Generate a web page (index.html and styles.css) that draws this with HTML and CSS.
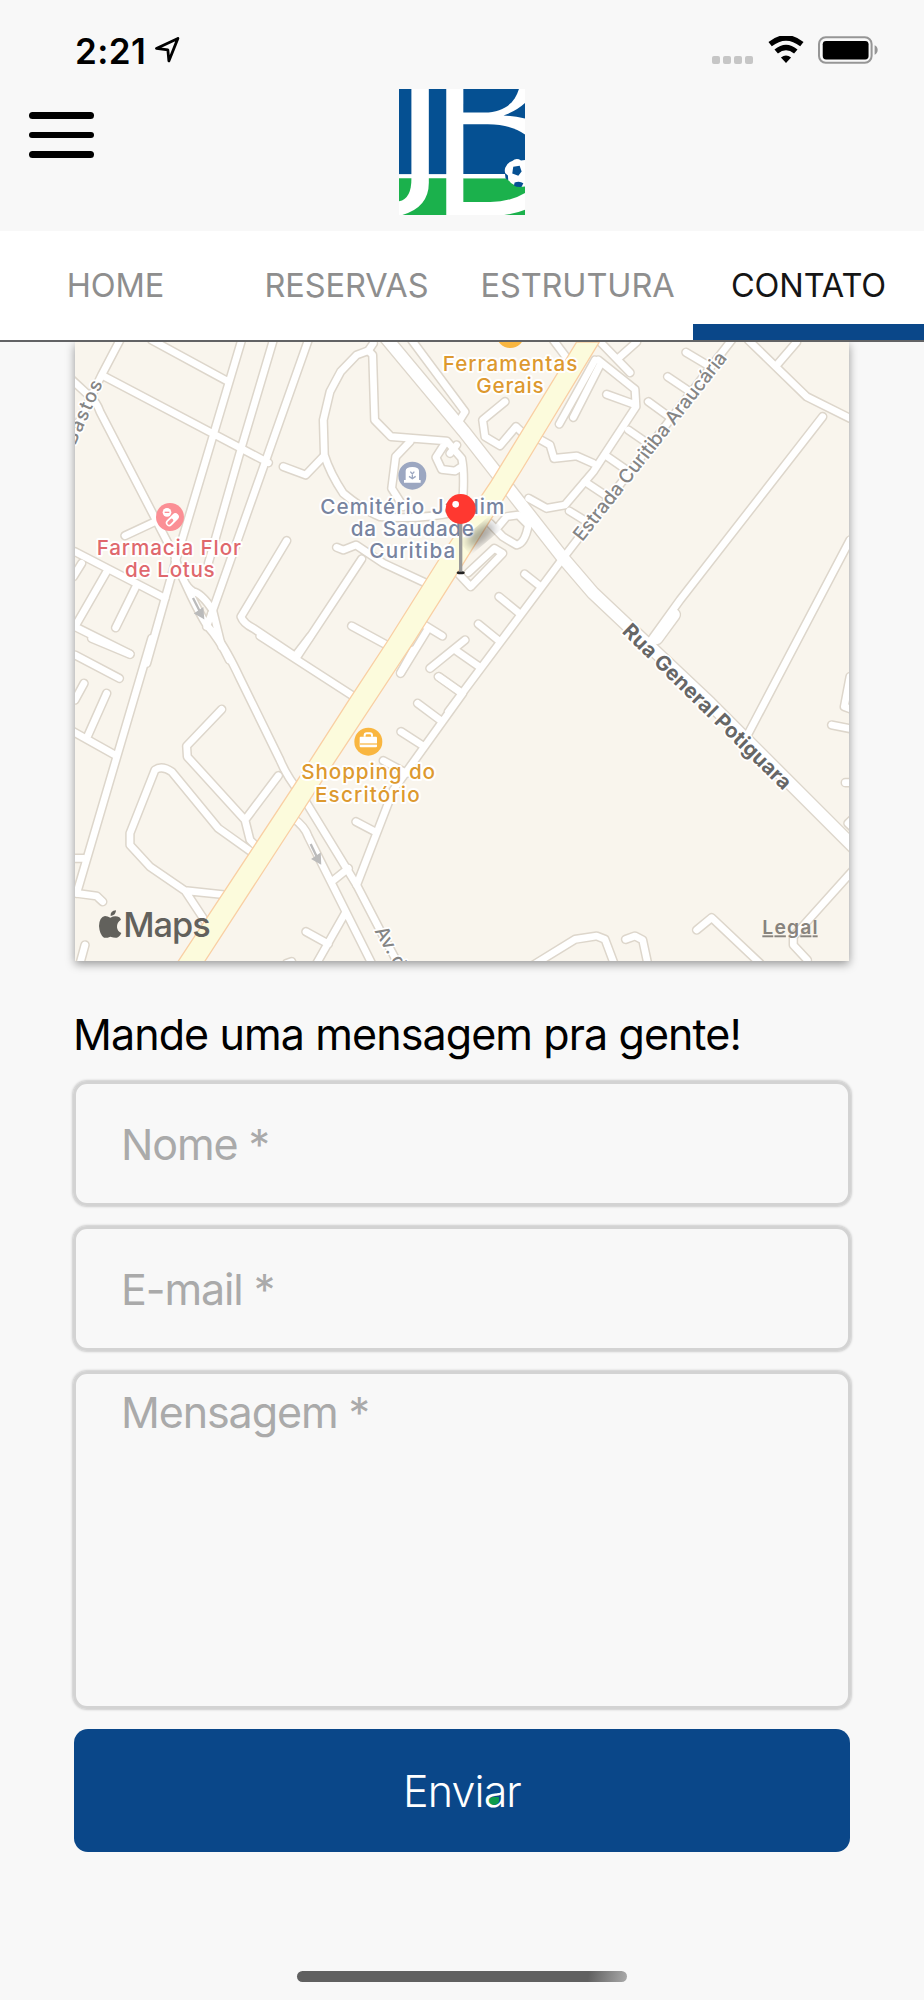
FILE: index.html
```html
<!DOCTYPE html>
<html lang="pt-BR">
  <head>
    <meta charset="UTF-8" />
    <meta name="viewport" content="width=device-width, initial-scale=1.0" />
    <title>JB | Contato</title>

    <link rel="stylesheet" href="styles.css">
  </head>
  <body>
    <div class="status-bar">
      <div class="status-left">
        <span class="time">2:21</span>
        <svg class="location" viewBox="0 0 72 75">
          <path d="M4 33 L66 4 L40 69 L37 37 Z" />
        </svg>
      </div>
      <div class="status-right">
        <div class="signal"><i></i><i></i><i></i><i></i></div>
        <svg class="wifi" viewBox="0 0 106 80">
          <path d="M6 24 Q53 -13 100 24" />
          <path d="M24 46 Q53 22 82 46" />
          <path class="wifi-dot" d="M53 80 L38 64 Q53 51 68 64 Z" />
        </svg>
        <svg class="battery" viewBox="0 0 178 82">
          <rect class="battery-shell" x="3" y="3" width="156" height="76" rx="20" />
          <rect x="14" y="14" width="136" height="55" rx="10" />
          <path class="battery-tip" d="M168 27 Q177 31 177 41 Q177 51 168 55 Z" />
        </svg>
      </div>
    </div>

    <header class="header">
      <button class="menu" aria-label="Menu"><span></span><span></span><span></span></button>
      <svg class="logo" viewBox="0 0 376 376">
        <rect width="376" height="376" fill="#fff" />
        <g fill="#055092">
          <rect width="37" height="254" />
          <rect x="89" width="52" height="254" />
          <path d="M192 0H358C346 42 312 70 255 70H192Z" />
          <path d="M376 42V88Q344 80 312 79Q350 66 376 42Z" />
          <path d="M192 105H265Q335 106 376 136V254H192Z" />
        </g>
        <g fill="#1bb14c">
          <path d="M0 266H37Q38 327 0 335Z" />
          <path d="M89 266H141V376H10Q89 353 89 280Z" />
          <path d="M192 266H376V310Q330 338 268 337H192Z" />
          <path d="M376 360V376H314Q350 371 376 360Z" />
        </g>
        <path fill="#fff" d="M192 254H320V266H192Z" />
        <path fill="#fff" d="M338 215Q350 204 364 213L376 212V291Q340 294 325 270Q312 252 317 235Q322 220 338 215Z" />
        <g fill="#055092">
          <path d="M341 232L360 229L366 246L356 259L338 252Z" />
          <path d="M345 279Q360 273 371 281L366 292Q352 294 343 288Z" />
          <path d="M316 251L325 258L326 272L318 266Z" />
        </g>
      </svg>
    </header>

    <nav class="tabs">
      <a class="tab">HOME</a>
      <a class="tab">RESERVAS</a>
      <a class="tab">ESTRUTURA</a>
      <a class="tab active">CONTATO</a>
    </nav>

    <main>
      <svg class="map" viewBox="45 36 2322 1857">
        <defs>
          <filter id="blur"><feGaussianBlur stdDeviation="14" /></filter>
          <g id="streets">
            <!-- north west -->
            <path d="M180 30L125 135L45 300M125 135L625 398M275 30L505 155M545 30L345 700L260 1000M640 30L545 350L445 700M745 30L455 850" />
            <path d="M20 135L85 195Q110 215 120 245L345 680Q370 770 400 785Q425 790 458 840L485 950M345 690Q400 820 440 885Q480 930 508 990M455 850L440 890" />
            <path d="M195 617L285 575M45 665L315 805M140 725L45 890L210 972M230 765L167 893M65 700L40 740M670 410L737 435L790 380" />
            <path d="M940 40L925 62L890 75L842 125L810 185L790 270L793 375Q810 430 850 490Q910 540 960 560Q1080 570 1190 545" />
            <path d="M925 62L938 75L944 270L993 320L1160 333L1205 385Q1215 430 1207 530M1050 335L1007 380L995 475L1030 530M1155 340L1128 382L1145 418L1185 423L1205 410" />
            <path d="M680 632L543 860Q550 880 580 895L700 975M905 687L708 985M830 652L850 660L888 645L970 700L1110 765M875 888L980 945M1085 880L1147 918M1105 895L1022 1030" />
            <path d="M1055 30L1215 245L1190 285M1190 345L1170 370" />
            <!-- north east -->
            <g transform="translate(1170 0)">
              <path d="M310 30L370 110M445 30L540 128M560 36L505 85M435 90L328 282M450 105L370 262M445 90L555 178L558 230L430 425L345 525L290 535L236 505M470 193L550 222" />
              <path d="M165 215L98 270L105 320L150 347L198 290L240 330M255 320L300 345L312 385L380 378L430 400" />
              <path d="M708 67L780 110M653 140L720 185M595 215L660 262M535 300L600 345M465 375L530 420M405 455L465 495M358 543L410 575" />
              <path d="M845 30L335 690L-5 1145M224 732L272 770M147 800L208 850M85 882L150 935M20 963L90 1012" />
              <path d="M895 30L1070 200L1200 265M1040 36L978 108M1118 260L690 810L600 935M1200 630L890 1220" />
              <path d="M120 580L158 620L200 645Q225 640 235 585L205 555L170 560L145 590M15 720L62 770L158 670L133 655L55 728" />
            </g>
            <!-- south west -->
            <g transform="translate(0 930)">
              <path d="M45 45L178 115M95 -5L210 43M275 -5L50 760M72 130L45 180M140 160L80 295M40 275L165 345M470 -10Q500 30 540 115L660 360Q680 410 725 465L890 735L960 870L1010 963" />
              <path d="M600 -12L890 175M750 -10L708 45M485 208L380 318L382 350L555 540L570 600L590 620M655 407L555 540M580 640L475 565L335 395Q305 375 285 390L210 580L210 615L270 680L375 752L500 765M375 752L440 850" />
              <path d="M40 655L70 655M50 760L110 768L128 785M75 915L60 970M700 535Q735 560 745 590L935 970M815 725L865 685M738 875L805 912M855 820L770 970M680 970L695 965" />
              <path d="M1208 160L1000 450L890 735M888 545L945 575M970 362L1040 400M1023 275L1090 318M1073 190L1140 240M1137 110L1205 158M1022 98L1060 30" />
            </g>
            <!-- south east -->
            <g transform="translate(1170 930)">
              <path d="M-60 85L45 0M-35 110L35 160M250 975L375 898L440 888L465 898L492 970M527 898L555 888L578 900L593 970M740 870L785 833L930 970" />
              <path d="M1210 690L1030 890L1030 915L1072 960M1145 255L1210 268M1200 110L1183 200L1210 210M1186 428H1210M1210 535L1194 550L1210 565" />
            </g>
          </g>
          <g id="avenues">
            <path d="M975 20L1210 302L1510 685L1600 790L1950 1120L2400 1570" />
            <path d="M1842 854L1790 925" />
          </g>
        </defs>

        <rect class="land" x="45" y="36" width="2322" height="1857" />
        <use href="#streets" class="street-case" />
        <use href="#avenues" class="avenue-case" />
        <use href="#streets" class="street" />
        <use href="#avenues" class="avenue" />
        <path class="highway" d="M1550 36L1293 455L1155 660L985 930L870 1105L700 1370L355 1893L340 1930H410L435 1893L710 1470L765 1385L1065 930L1182 745L1385 420L1618 36Z" />
        <g class="arrow">
          <path d="M399 804L420 845" /><path d="M429 862L408 850L427 837Z" />
          <path d="M752 1542L771 1582" /><path d="M780 1598L760 1587L779 1574Z" />
        </g>

        <g class="street-name">
          <text x="129" y="160" text-anchor="end" transform="rotate(-66 129 160)" textLength="206">Bastos</text>
          <text x="1567" y="637" transform="rotate(-51.7 1567 637)" textLength="704">Estrada Curitiba Araucária</text>
          <text x="943" y="1802" transform="rotate(61 943 1802)">Av. do</text>
          <text class="strong" x="1684" y="907" transform="rotate(44.4 1684 907)" textLength="680">Rua General Potiguara</text>
        </g>

        <g class="place orange">
          <circle cx="1351" cy="12" r="42" />
          <text x="1148" y="122" textLength="404">Ferramentas</text>
          <text x="1249" y="188" textLength="202">Gerais</text>
          <circle cx="925" cy="1235" r="42" />
          <rect class="glyph" x="899" y="1220" width="52" height="32" rx="3" />
          <path class="glyph-line" d="M914 1220V1216Q914 1210 920 1210H930Q936 1210 936 1216V1220" />
          <path d="M899 1242H951" stroke="#fbd28a" stroke-width="6" />
          <text x="724" y="1348" textLength="401">Shopping do</text>
          <text x="765" y="1415" textLength="314">Escritório</text>
        </g>

        <g class="place red">
          <circle cx="330" cy="561" r="42" />
          <circle class="glyph" cx="321" cy="547" r="13" />
          <path d="M314 547H328" stroke="#fb8f95" stroke-width="4" />
          <path d="M328 578L346 560" stroke="#fff" stroke-width="21" stroke-linecap="round" />
          <path d="M327 579L335 571" stroke="#fb8f95" stroke-width="10" stroke-linecap="round" />
          <text x="110" y="675" textLength="433">Farmacia Flor</text>
          <text x="195" y="741" textLength="269">de Lotus</text>
        </g>

        <g class="place slate">
          <circle cx="1057" cy="437" r="42" />
          <path class="glyph" d="M1037 450V422Q1038 411 1057 411Q1076 411 1077 422V450H1082V458H1032V450Z" />
          <path d="M1057 430V448M1047 439L1057 446L1067 439M1051 425L1057 432L1063 425" fill="none" stroke="#9ca7c1" stroke-width="4" />
          <text x="781" y="552" textLength="552">Cemitério Jardim</text>
          <text x="872" y="619" textLength="370">da Saudade</text>
          <text x="928" y="685" textLength="258">Curitiba</text>
        </g>

        <ellipse class="pin-shadow" cx="1262" cy="615" rx="50" ry="21" transform="rotate(-40 1262 615)" />
        <ellipse cx="1202" cy="728" rx="12" ry="5" fill="#222" />
        <path d="M1202 570V725" stroke="#999" stroke-width="10" />
        <circle cx="1202" cy="537" r="45" fill="#ff3830" />
        <circle cx="1187" cy="523" r="10" fill="#fff" />

        <g class="brand">
          <path d="M151 1763Q166 1755 178 1762Q181 1764 183 1769Q170 1777 171 1792Q172 1804 184 1809Q178 1822 170 1823Q163 1824 151 1820Q139 1825 132 1823Q119 1815 117 1788Q118 1761 135 1758Q143 1758 151 1763ZM152 1758Q150 1743 168 1741Q168 1756 152 1758Z" />
          <text x="190" y="1822" textLength="262">Maps</text>
        </g>
        <text class="legal" x="2107" y="1813" textLength="166">Legal</text>
      </svg>

      <form class="contact">
        <h2>Mande uma mensagem pra gente!</h2>
        <input type="text" id="name" placeholder="Nome *" />
        <input type="text" id="email" placeholder="E-mail *" />
        <textarea id="message" placeholder="Mensagem *"></textarea>
        <button class="submit" type="button"><span>Enviar</span></button>
      </form>
    </main>

    <div class="home-indicator"></div>
  </body>
</html>
```
FILE: styles.css
```css
* {
  box-sizing: border-box;
}

body {
  display: flex;
  flex-direction: column;
  height: 2000px;
  margin: 0;
  overflow: hidden;
  background-color: #f8f8f8;
  color: #000000;
  font-family: Inter, "Liberation Sans", sans-serif;
}

/* status bar */

.status-bar {
  display: flex;
  justify-content: space-between;
  height: 86px;
  padding: 36px 46px 0 75px;
}

.status-left {
  display: flex;
  align-items: flex-start;
}

.time {
  width: 80px;
  font-size: 35px;
  font-weight: 600;
  line-height: 30px;
  letter-spacing: 0.4px;
}

.location {
  width: 25px;
  height: 26px;
  margin-top: 1px;
  fill: none;
  stroke: #000000;
  stroke-width: 8;
  stroke-linejoin: round;
}

.status-right {
  display: flex;
  align-items: flex-start;
}

.signal {
  display: flex;
  gap: 3px;
  margin: 20px 15px 0 0;
}

.signal i {
  width: 8px;
  height: 8px;
  border-radius: 2px;
  background-color: #c6c6c6;
}

.wifi {
  width: 36px;
  height: 27px;
  margin-right: 14px;
  fill: none;
  stroke: #000000;
  stroke-width: 16;
}

.wifi .wifi-dot {
  fill: #000000;
  stroke: none;
}

.battery {
  width: 60px;
  height: 28px;
}

.battery-shell {
  fill: none;
  stroke: #969696;
  stroke-width: 6;
}

.battery-tip {
  fill: #969696;
}

/* header */

.header {
  display: grid;
  grid-template-columns: 1fr auto 1fr;
  align-items: start;
  height: 145px;
  padding: 3px 29px 0;
}

.menu {
  display: flex;
  flex-direction: column;
  gap: 13px;
  width: 65px;
  margin-top: 23px;
  padding: 0;
  border: 0;
  background: none;
}

.menu span {
  width: 65px;
  height: 6.6px;
  border-radius: 4px;
  background-color: #000000;
}

.logo {
  width: 126px;
  height: 126px;
}

/* tabs */

.tabs {
  display: grid;
  grid-template-columns: repeat(4, 1fr);
  height: 111px;
  border-bottom: 2px solid #626365;
  background-color: #ffffff;
}

.tab {
  padding-top: 18px;
  color: #8e8e8e;
  font-size: 32.5px;
  line-height: 74px;
  letter-spacing: -0.1px;
  text-align: center;
}

.tab.active {
  border-bottom: 16px solid #0a4789;
  color: #151515;
}

/* map */

main {
  padding: 0 74px;
}

.map {
  display: block;
  width: 774px;
  height: 619px;
  margin-left: 1px;
  box-shadow: 0 3px 9px rgba(0, 0, 0, 0.4);
  clip-path: inset(0 -20px -20px -20px);
}

.land {
  fill: #f9f5ed;
}

.street-case,
.avenue-case,
.street,
.avenue {
  fill: none;
  stroke-linecap: round;
  stroke-linejoin: round;
}

.street-case {
  stroke: #ddd6cb;
  stroke-width: 29;
}

.avenue-case {
  stroke: #ddd6cb;
  stroke-width: 43;
}

.street {
  stroke: #ffffff;
  stroke-width: 20;
}

.avenue {
  stroke: #ffffff;
  stroke-width: 35;
}

.highway {
  fill: #fcfbdc;
  stroke: #f9cfa3;
  stroke-width: 4;
}

.arrow {
  fill: #bbbbbb;
  stroke: #bbbbbb;
  stroke-width: 7;
}

.map text {
  paint-order: stroke;
  stroke-linejoin: round;
}

.street-name {
  fill: #858585;
  stroke: #ffffff;
  stroke-width: 10;
  font-size: 57px;
  font-weight: 500;
}

.street-name .strong {
  fill: #666666;
  font-size: 62px;
  font-weight: 700;
}

.place text {
  stroke: #ffffff;
  stroke-width: 12;
  font-size: 62px;
  font-weight: 550;
}

.orange {
  fill: #dd992f;
}

.orange circle {
  fill: #f9b640;
}

.red {
  fill: #df686d;
}

.red circle {
  fill: #fb8f95;
}

.slate {
  fill: #78849f;
}

.slate circle {
  fill: #9ca7c1;
}

.place .glyph {
  fill: #ffffff;
}

.glyph-line {
  fill: none;
  stroke: #ffffff;
  stroke-width: 6;
}

.pin-shadow {
  fill: rgba(0, 0, 0, 0.35);
  filter: url(#blur);
}

.brand {
  fill: #62615c;
  font-size: 103px;
  font-weight: 450;
}

.legal {
  fill: #87837d;
  font-size: 58px;
  font-weight: 600;
  text-decoration: underline;
}

/* contact form */

.contact {
  display: flex;
  flex-direction: column;
}

h2 {
  margin: 46px 0 20px -1px;
  font-size: 43px;
  font-weight: 400;
  line-height: 54px;
  letter-spacing: -0.9px;
  white-space: nowrap;
}

input,
textarea {
  width: 778px;
  height: 125px;
  margin: 0 0 20px -1px;
  padding: 0 45px;
  border: 3px solid #d3d3d3;
  border-radius: 14px;
  background: none;
  box-shadow: 0 0 3px rgba(0, 0, 0, 0.35);
  font-family: inherit;
  font-size: 43px;
  letter-spacing: -1.1px;
  resize: none;
}

textarea {
  height: 338px;
  padding-top: 10px;
  line-height: 56px;
}

::placeholder {
  color: #aaaaaa;
}

.submit {
  width: 776px;
  height: 123px;
  padding: 0;
  border: 0;
  border-radius: 14px;
  background-color: #0a4789;
  color: #ffffff;
  font-family: inherit;
  font-size: 43px;
  font-weight: 350;
  letter-spacing: -0.9px;
}

.submit span {
  position: relative;
  z-index: 0;
}

/* green drop inside the "a" */
.submit span::before {
  content: "";
  position: absolute;
  z-index: -1;
  right: 22px;
  bottom: 12px;
  width: 11px;
  height: 8px;
  border-radius: 60% 10% 60% 50%;
  background-color: #0c9b4b;
}

.home-indicator {
  width: 330px;
  height: 11px;
  margin: auto auto 18px;
  border-radius: 6px;
  background: linear-gradient(100deg, #606060 88%, #aaaaaa);
}
```
